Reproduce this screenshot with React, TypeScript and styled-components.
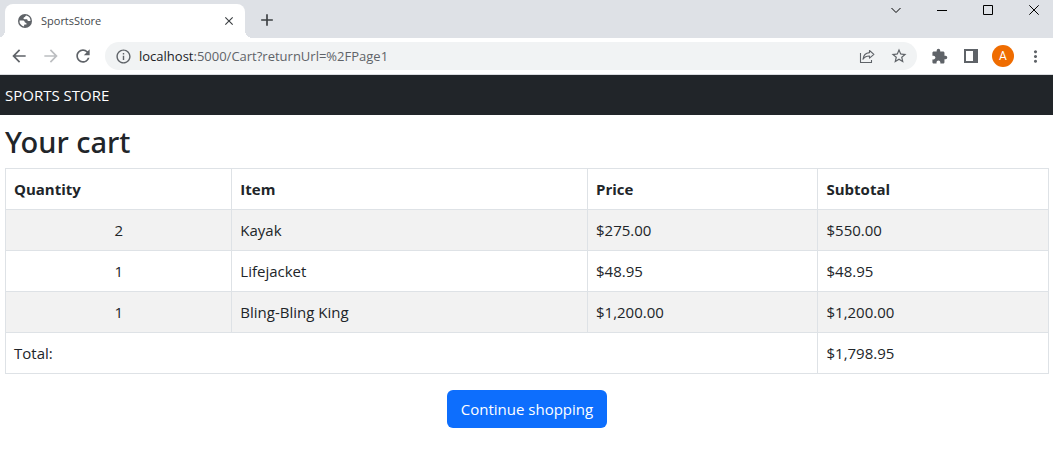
import React from "react";
import styled, { createGlobalStyle } from "styled-components";
import {
  MdAdd,
  MdArrowBack,
  MdArrowForward,
  MdClose,
  MdExtension,
  MdInfoOutline,
  MdMoreVert,
  MdRefresh,
  MdStarBorder,
} from "react-icons/md";

const GlobalStyle = createGlobalStyle`
  *, *::before, *::after { box-sizing: border-box; }
  body {
    margin: 0;
    background: #fff;
    color: #212529;
    font-family: "Open Sans", "Noto Sans", sans-serif;
    font-size: 15px;
    line-height: 24px;
  }
  svg { display: block; flex: none; }
`;

const TabStrip = styled.div`
  display: flex;
  height: 38px;
  padding-left: 5px;
  background: #dee1e6;
`;

const Tab = styled.div`
  position: relative;
  display: flex;
  align-items: center;
  gap: 9px;
  width: 240px;
  margin-top: 4px;
  padding: 0 8px 0 13px;
  border-radius: 8px 8px 0 0;
  background: #fff;
  color: #45494d;
  font-size: 11px;
  line-height: 16px;

  &::before,
  &::after {
    content: "";
    position: absolute;
    bottom: 0;
    width: 8px;
    height: 8px;
  }
  &::before {
    right: 100%;
    background: radial-gradient(circle at 0 0, transparent 8px, #fff 8px);
  }
  &::after {
    left: 100%;
    background: radial-gradient(circle at 100% 0, transparent 8px, #fff 8px);
  }
`;

const TabTitle = styled.span`
  flex: 1;
`;

const IconButton = styled.button<{ $width?: number; $color?: string }>`
  display: flex;
  align-items: center;
  justify-content: center;
  flex: none;
  width: ${(p) => p.$width ?? 32}px;
  height: 28px;
  padding: 0;
  border: 0;
  background: none;
  color: ${(p) => p.$color ?? "#5f6368"};
`;

const NewTab = styled(IconButton)`
  margin: 6px 0 0 6px;
`;

const WindowControls = styled.div`
  display: flex;
  gap: 8px;
  height: 20px;
  margin-left: auto;
  align-items: center;
`;

const Toolbar = styled.div`
  display: flex;
  align-items: center;
  height: 37px;
  padding: 0 2px 0 3px;
  border-bottom: 1px solid #dadce0;
`;

const AddressBar = styled.div`
  display: flex;
  align-items: center;
  flex: 1;
  min-width: 0;
  height: 28px;
  margin: 0 6px;
  padding: 0 2px;
  border-radius: 14px;
  background: #f1f3f4;
`;

const Address = styled.div`
  flex: 1;
  overflow: hidden;
  white-space: nowrap;
  color: #5f6368;
  font-size: 13px;
  line-height: 20px;
`;

const Host = styled.span`
  color: #202124;
`;

const Avatar = styled.span`
  display: flex;
  align-items: center;
  justify-content: center;
  width: 22px;
  height: 22px;
  border-radius: 50%;
  background: #ef6c00;
  color: #fff;
  font-family: Roboto, sans-serif;
  font-size: 12px;
`;

const StoreBar = styled.header`
  padding: 8px 5px;
  background: #212529;
  color: #fff;
`;

const Content = styled.main`
  padding: 8px 4px 24px 5px;
`;

const Title = styled.h1`
  margin: 0 0 8px;
  font-family: "Noto Sans", "Open Sans", sans-serif;
  font-size: 29px;
  font-weight: 500;
  line-height: 37px;
`;

const CartTable = styled.table`
  width: 100%;
  table-layout: fixed;
  border-collapse: collapse;

  tbody tr:nth-child(odd) {
    background: #f2f2f2;
  }
`;

const Col = styled.col<{ $share: number }>`
  width: ${(p) => p.$share}%;
`;

const HeadCell = styled.th`
  padding: 8px;
  border: 1px solid #dee2e6;
  font-weight: 700;
  text-align: left;
`;

const Cell = styled.td<{ $center?: boolean }>`
  padding: 8px;
  border: 1px solid #dee2e6;
  text-align: ${(p) => (p.$center ? "center" : "left")};
`;

const Actions = styled.div`
  display: flex;
  justify-content: center;
  margin-top: 16px;
`;

const PrimaryLink = styled.a`
  padding: 7px 14px;
  border-radius: 6px;
  background: #0d6efd;
  color: #fff;
  text-decoration: none;
`;

const GlobeIcon = () => (
  <svg width="14" height="14" viewBox="0 0 14 14" aria-hidden="true">
    <circle cx="7" cy="7" r="7" fill="#5f6368" />
    <path
      d="M8.2 1.6c-.5.3-1 .6-1 1.200 0 .5-.7.5-1.200.6-.5.1-.5.6-.5 1 0 .5.4.8 1 .8h2c.7 0 1 .5 1 1 0 .6.6.8 1.200.8h1.800A5.600 5.600 0 0 0 8.200 1.600z M1.500 6.400h3.200c1.200 0 2 .7 2 1.700 0 .5.4.7.9.7.6 0 .9.4.9 1v.8H6.800c-.5 0-.7.3-.7.7v1.200A5.600 5.600 0 0 1 1.500 6.400z"
      fill="#fff"
    />
  </svg>
);

const ShareIcon = () => (
  <svg
    width="16"
    height="16"
    viewBox="0 0 16 16"
    fill="none"
    stroke="#5f6368"
    strokeWidth="1.1"
    strokeLinejoin="round"
    aria-hidden="true"
  >
    <path d="M1.500 5v9.500h11v-2.500" />
    <path d="M10.500 2.500l4.400 3.800-4.400 3.800V8C7.700 7.900 5.600 8.900 4 11.200c.4-3.600 2.600-6.200 6.500-6.600z" />
  </svg>
);

const SidePanelIcon = () => (
  <svg width="14" height="14" viewBox="0 0 14 14" aria-hidden="true">
    <path d="M0 0h14v14H0z M2 2v10h7V2z" fill="#5f6368" fillRule="evenodd" />
  </svg>
);

type Glyph = "search" | "minimize" | "maximize" | "close";

const glyphPaths: Record<Glyph, string> = {
  search: "M0.500 3l4.500 4.500L9.500 3",
  minimize: "M0 5.500h10",
  maximize: "M0.500 0.500h9v9h-9z",
  close: "M0.300 0.300l9.400 9.400M9.700 0.300L0.300 9.700",
};

const WindowGlyph = ({ name }: { name: Glyph }) => (
  <svg
    width="10"
    height="10"
    viewBox="0 0 10 10"
    fill="none"
    stroke="#000"
    aria-hidden="true"
  >
    <path d={glyphPaths[name]} />
  </svg>
);

const windowButtons: { label: string; glyph: Glyph }[] = [
  { label: "Search tabs", glyph: "search" },
  { label: "Minimize", glyph: "minimize" },
  { label: "Maximize", glyph: "maximize" },
  { label: "Close window", glyph: "close" },
];

const lines = [
  { quantity: 2, item: "Kayak", price: 275 },
  { quantity: 1, item: "Lifejacket", price: 48.95 },
  { quantity: 1, item: "Bling-Bling King", price: 1200 },
];

const money = (value: number) =>
  value.toLocaleString("en-US", { style: "currency", currency: "USD" });

const total = lines.reduce((sum, l) => sum + l.quantity * l.price, 0);

export default function App() {
  return (
    <>
      <GlobalStyle />
      <TabStrip>
        <Tab>
          <GlobeIcon />
          <TabTitle>SportsStore</TabTitle>
          <IconButton $width={16} $color="#3c4043" aria-label="Close tab">
            <MdClose size={14} />
          </IconButton>
        </Tab>
        <NewTab $color="#3c4043" aria-label="New tab">
          <MdAdd size={20} />
        </NewTab>
        <WindowControls>
          {windowButtons.map((b) => (
            <IconButton key={b.glyph} $width={38} aria-label={b.label}>
              <WindowGlyph name={b.glyph} />
            </IconButton>
          ))}
        </WindowControls>
      </TabStrip>
      <Toolbar>
        <IconButton aria-label="Back">
          <MdArrowBack size={20} />
        </IconButton>
        <IconButton $color="#bcbec1" aria-label="Forward">
          <MdArrowForward size={20} />
        </IconButton>
        <IconButton aria-label="Reload">
          <MdRefresh size={20} />
        </IconButton>
        <AddressBar>
          <IconButton aria-label="Site information">
            <MdInfoOutline size={17} />
          </IconButton>
          <Address>
            <Host>localhost</Host>:5000/Cart?returnUrl=%2FPage1
          </Address>
          <IconButton aria-label="Share this page">
            <ShareIcon />
          </IconButton>
          <IconButton aria-label="Bookmark this page">
            <MdStarBorder size={18} />
          </IconButton>
        </AddressBar>
        <IconButton aria-label="Extensions">
          <MdExtension size={17} />
        </IconButton>
        <IconButton aria-label="Side panel">
          <SidePanelIcon />
        </IconButton>
        <IconButton aria-label="Profile">
          <Avatar>A</Avatar>
        </IconButton>
        <IconButton aria-label="Menu">
          <MdMoreVert size={19} />
        </IconButton>
      </Toolbar>
      <StoreBar>SPORTS STORE</StoreBar>
      <Content>
        <Title>Your cart</Title>
        <CartTable>
          <colgroup>
            <Col $share={21.7} />
            <Col $share={34.1} />
            <Col $share={22.1} />
            <Col $share={22.1} />
          </colgroup>
          <thead>
            <tr>
              <HeadCell scope="col">Quantity</HeadCell>
              <HeadCell scope="col">Item</HeadCell>
              <HeadCell scope="col">Price</HeadCell>
              <HeadCell scope="col">Subtotal</HeadCell>
            </tr>
          </thead>
          <tbody>
            {lines.map((l) => (
              <tr key={l.item}>
                <Cell $center>{l.quantity}</Cell>
                <Cell>{l.item}</Cell>
                <Cell>{money(l.price)}</Cell>
                <Cell>{money(l.quantity * l.price)}</Cell>
              </tr>
            ))}
          </tbody>
          <tfoot>
            <tr>
              <Cell colSpan={3}>Total:</Cell>
              <Cell>{money(total)}</Cell>
            </tr>
          </tfoot>
        </CartTable>
        <Actions>
          <PrimaryLink href="#products">Continue shopping</PrimaryLink>
        </Actions>
      </Content>
    </>
  );
}
